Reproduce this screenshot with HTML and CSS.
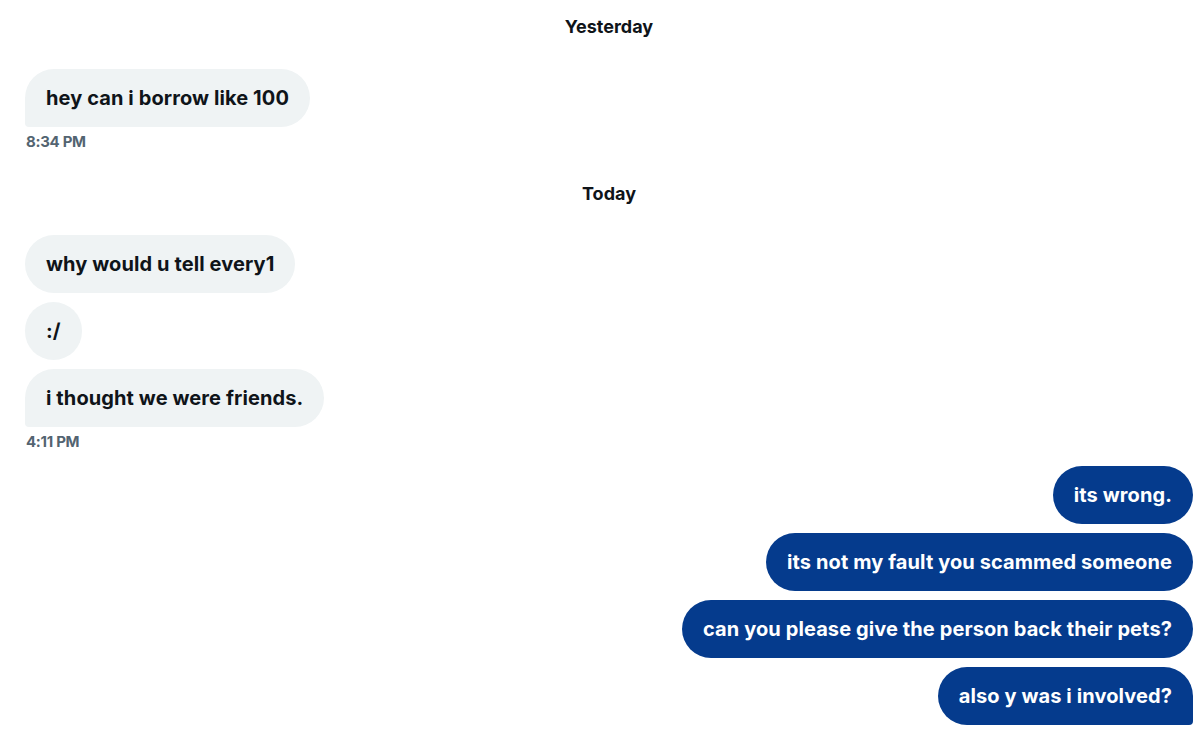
FILE: index.html
```html
<!DOCTYPE html>
<html>
<head>
<meta charset="utf-8">
<link rel="stylesheet" href="styles.css">
</head>
<body>
<div class="thread">
  <div class="day">Yesterday</div>
  <div class="group in">
    <div class="bubble last">hey can i borrow like 100</div>
    <div class="time">8:34 PM</div>
  </div>
  <div class="day today">Today</div>
  <div class="group in">
    <div class="bubble">why would u tell every1</div>
    <div class="bubble">:/</div>
    <div class="bubble last">i thought we were friends.</div>
    <div class="time">4:11 PM</div>
  </div>
  <div class="group out">
    <div class="bubble">its wrong.</div>
    <div class="bubble">its not my fault you scammed someone</div>
    <div class="bubble">can you please give the person back their pets?</div>
    <div class="bubble last">also y was i involved?</div>
  </div>
</div>
</body>
</html>
```
FILE: styles.css
```css
html, body {
  margin: 0;
  padding: 0;
  background: #ffffff;
}
body {
  font-family: Inter, "Liberation Sans", sans-serif;
  color: #0f1419;
}
.thread {
  width: 1200px;
  height: 729px;
  overflow: hidden;
  box-sizing: border-box;
  padding: 15px 7px 0 25px;
  display: flex;
  flex-direction: column;
}
.day {
  text-align: center;
  font-size: 18px;
  line-height: 24px;
  font-weight: 700;
  margin-bottom: 30px;
}
.day.today { margin-bottom: 29px; }
.group {
  display: flex;
  flex-direction: column;
  gap: 9px;
  margin-bottom: 30px;
}
.group.in { align-items: flex-start; }
.group.out { align-items: flex-end; margin-top: -16px; }
.bubble {
  font-size: 20px;
  line-height: 26px;
  font-weight: 700;
  padding: 16px 21px;
  border-radius: 29px;
  background: #eff3f4;
  color: #0f1419;
  letter-spacing: 0.1px;
}
.group.in .bubble.last { border-bottom-left-radius: 4px; }
.group.out .bubble {
  background: #053b8d;
  color: #ffffff;
}
.group.out .bubble.last { border-bottom-right-radius: 4px; }
.time {
  font-size: 15px;
  line-height: 20px;
  font-weight: 700;
  color: #536471;
  margin-top: -4px;
  margin-left: 1px;
  letter-spacing: -0.3px;
}
```
